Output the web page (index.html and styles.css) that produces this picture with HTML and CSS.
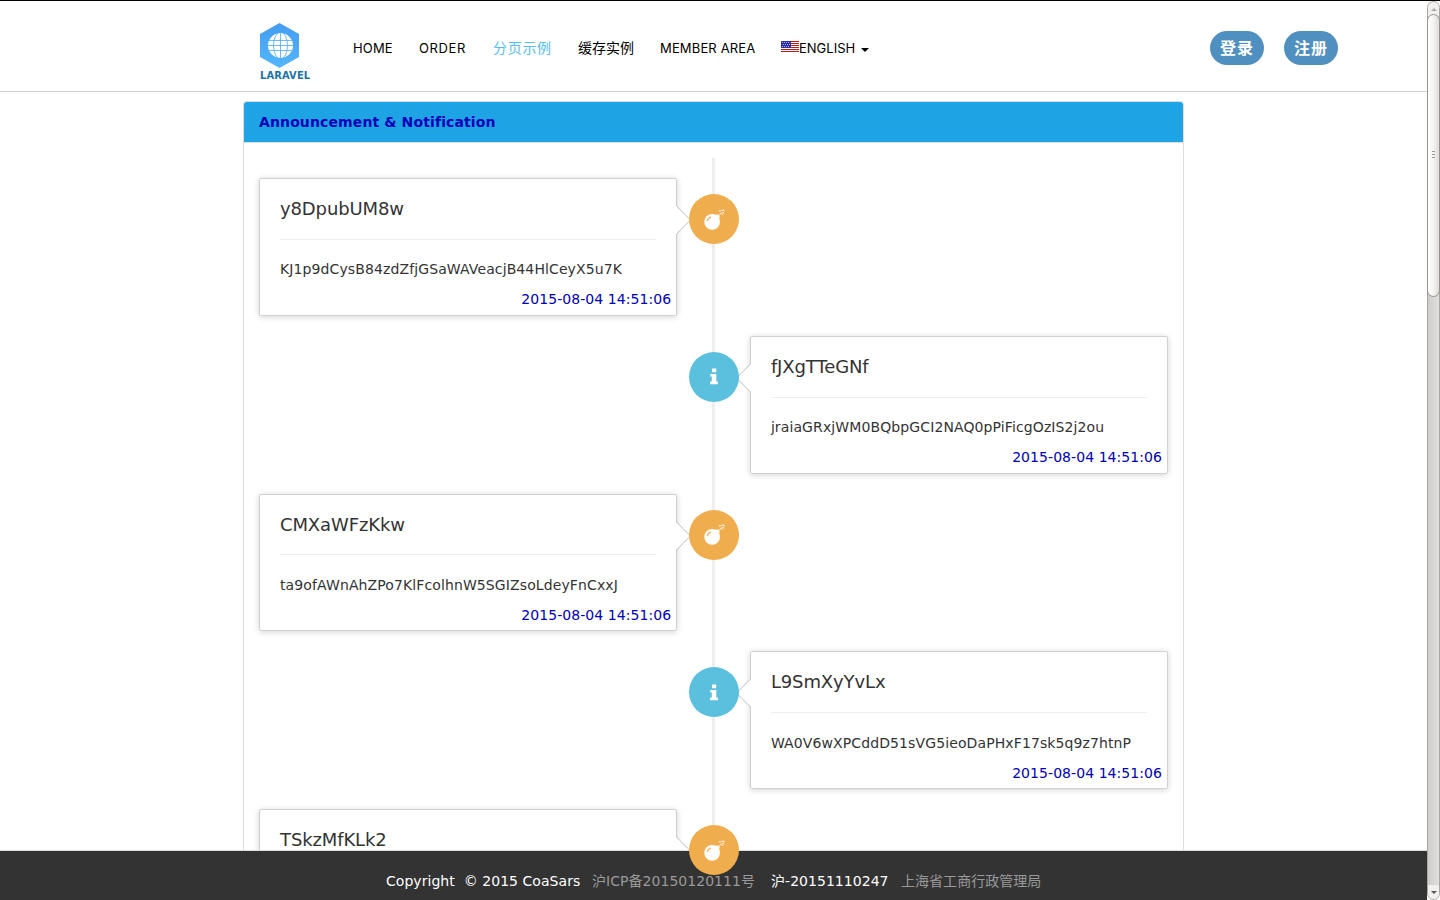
FILE: index.html
```html
<!DOCTYPE html>
<html lang="zh">
<head>
<meta charset="utf-8">
<title>Laravel</title>
<link rel="stylesheet" href="styles.css">
</head>
<body>
<svg class="defs" width="0" height="0">
  <symbol id="bomb" viewBox="0 0 22 22">
    <circle cx="8.500" cy="13.500" r="8.200" fill="#fff"/>
    <path d="M11.5 6l3.200-.2 1.500 1.700-.2 3z" fill="#fff"/>
    <path d="M3.400 12.400a5.400 5.400 0 0 1 4-4" fill="none" stroke="#f0ad4e" stroke-width="1.300"/>
    <path d="M15 7.300l3.400-3.400M15.600 2h2.200M18.400.8l.6 1.400M19.500 1.200h1.500v1.300M19.300 3.600l1.700.6M18.800 4.600l.4 1.500" fill="none" stroke="#fff" stroke-width="1"/>
  </symbol>
  <symbol id="info" viewBox="0 0 8 17">
    <path d="M2 .500h4.200v3.700H2zM.3 6h6v7.500h1.600v2.700H.1v-2.700h1.700V8.600H.3z" fill="#fff"/>
  </symbol>
</svg>
<div class="window">
  <div class="page">
    <header class="header">
      <a class="brand">
        <svg class="logo" viewBox="0 0 40 46" width="40" height="46">
          <defs><linearGradient id="g" x1="0" y1="0" x2="0" y2="1"><stop offset="0" stop-color="#449cf0"/><stop offset="1" stop-color="#55b6ff"/></linearGradient></defs>
          <path d="M19.5 0L39 11v23L19.5 45 0 34V11z" fill="url(#g)"/>
          <circle cx="20.5" cy="22.5" r="12.5" fill="#fff"/>
          <g fill="none" stroke="#4ca9f8" stroke-width=".8">
            <path d="M20.5 10v25M8 22.500h25M9 17.500h23M9 27.500h23"/>
            <ellipse cx="20.5" cy="22.500" rx="7" ry="13.500"/>
          </g>
        </svg>
        <span class="brand-name">LARAVEL</span>
      </a>
      <nav class="nav">
        <a>HOME</a>
        <a class="order">ORDER</a>
        <a class="cn active">分页示例</a>
        <a class="cn cache">缓存实例</a>
        <a>MEMBER AREA</a>
        <a class="lang"><svg class="flag" viewBox="0 0 18 11" width="18" height="11"><path fill="#fff" d="M0 0h18v11H0z"/><path stroke="#c01818" d="M0 .5h18M0 2.500h18M0 4.500h18M0 6.500h18M0 8.500h18M0 10.500h18"/><path fill="#3030a8" d="M0 0h10v7H0z"/><path stroke="#a4a4e0" stroke-dasharray="1 1" d="M1 1.500h8M2 3.500h7M1 5.500h8"/></svg><span>ENGLISH</span><i class="caret"></i></a>
      </nav>
      <div class="auth"><a class="btn">登录</a><a class="btn">注册</a></div>
    </header>
    <main class="panel">
      <h3 class="panel-heading">Announcement &amp; Notification</h3>
      <ul class="timeline">
        <li class="item">
          <span class="badge warning"><svg class="bomb"><use href="#bomb"/></svg></span>
          <article class="card"><h4>y8DpubUM8w</h4><hr><p>KJ1p9dCysB84zdZfjGSaWAVeacjB44HlCeyX5u7K</p><time>2015-08-04 14:51:06</time></article>
        </li>
        <li class="item inverted">
          <span class="badge info"><svg class="i"><use href="#info"/></svg></span>
          <article class="card"><h4>fJXgTTeGNf</h4><hr><p>jraiaGRxjWM0BQbpGCI2NAQ0pPiFicgOzIS2j2ou</p><time>2015-08-04 14:51:06</time></article>
        </li>
        <li class="item">
          <span class="badge warning"><svg class="bomb"><use href="#bomb"/></svg></span>
          <article class="card"><h4>CMXaWFzKkw</h4><hr><p>ta9ofAWnAhZPo7KlFcolhnW5SGIZsoLdeyFnCxxJ</p><time>2015-08-04 14:51:06</time></article>
        </li>
        <li class="item inverted">
          <span class="badge info"><svg class="i"><use href="#info"/></svg></span>
          <article class="card"><h4>L9SmXyYvLx</h4><hr><p>WA0V6wXPCddD51sVG5ieoDaPHxF17sk5q9z7htnP</p><time>2015-08-04 14:51:06</time></article>
        </li>
        <li class="item">
          <span class="badge warning"><svg class="bomb"><use href="#bomb"/></svg></span>
          <article class="card"><h4>TSkzMfKLk2</h4></article>
        </li>
      </ul>
    </main>
    <footer class="footer">
      <span class="copy">Copyright &nbsp;© 2015 CoaSars</span>
      <span class="muted icp">沪ICP备20150120111号</span>
      <span class="reg">沪-20151110247</span>
      <span class="muted">上海省工商行政管理局</span>
    </footer>
  </div>
  <div class="scrollbar">
    <div class="arrow up"></div>
    <div class="thumb"><i></i><i></i><i></i></div>
    <div class="arrow down"></div>
  </div>
</div>
</body>
</html>
```
FILE: styles.css
```css
* { box-sizing: border-box; }
body {
  margin: 0;
  background: #fff;
  color: #333;
  font: 14px/20px "DejaVu Sans", "Noto Sans CJK SC", sans-serif;
}
.defs { position: absolute; }
.window {
  display: flex;
  height: 900px;
  border-top: 1px solid #000;
  overflow: hidden;
}
.page {
  width: 1427px;
  height: 899px;
  display: flex;
  flex-direction: column;
}
.header {
  flex: none;
  display: flex;
  height: 91px;
  padding: 22px 89px 0 260px;
  border-bottom: 1px solid #d0d0d0;
}
.brand { display: flex; flex-direction: column; width: 93px; }
.brand-name {
  color: #1b74a8;
  font: bold 11px/14px "DejaVu Sans Condensed", "DejaVu Sans", sans-serif;
  font-stretch: condensed;
  letter-spacing: .15px;
}
.nav {
  display: grid;
  grid-template-columns: 66px 74px 85px 82px 121px auto;
  height: 20px;
  margin-top: 16px;
  color: #000;
  font: 13px/19px Inter, sans-serif;
  letter-spacing: .15px;
  white-space: nowrap;
}
.order { letter-spacing: .6px; }
.cn {
  font: 14px/17px "AR PL UKai CN", KaiTi, "Noto Sans CJK SC", sans-serif;
  letter-spacing: .7px;
}
.active { color: #55bdf5; }
.cache { letter-spacing: 0; }
.lang { display: flex; letter-spacing: 0; }
.flag { margin-top: 2px; }
.caret {
  margin: 9px 0 0 6px;
  height: 0;
  border: 4px solid transparent;
  border-top-color: #000;
  border-bottom: 0;
}
.auth { display: flex; gap: 20px; margin: 8px 0 0 auto; }
.btn {
  width: 54px;
  height: 34px;
  border-radius: 17px;
  background: #5090c0;
  color: #fff;
  font: bold 16px/33px "Noto Sans CJK SC", sans-serif;
  letter-spacing: 1px;
  text-align: center;
}
.panel {
  flex: 1;
  min-height: 0;
  width: 941px;
  margin: 9px auto 0;
  border: 1px solid #ddd;
  border-bottom: 0;
  border-radius: 4px 4px 0 0;
}
.panel-heading {
  margin: 0;
  padding: 10px 15px;
  height: 41px;
  border-bottom: 1px solid #ddd;
  border-radius: 3px 3px 0 0;
  background: #1ea4e5;
  color: #0000b8;
  font-size: 14px;
  line-height: 20px;
  letter-spacing: .12px;
}
.timeline {
  position: relative;
  list-style: none;
  margin: 15px 15px 0;
  padding: 20px 0 0;
}
.timeline::before {
  content: "";
  position: absolute;
  top: 0;
  bottom: 0;
  left: 50%;
  width: 3px;
  margin-left: -1.5px;
  background: #eee;
}
.item { position: relative; display: flex; margin-bottom: 20px; }
.inverted { justify-content: flex-end; }
.badge {
  position: absolute;
  z-index: 100;
  top: 16px;
  left: 50%;
  width: 50px;
  height: 50px;
  margin-left: -24.5px;
  border-radius: 50%;
  display: flex;
  align-items: center;
  justify-content: center;
}
.warning { background: #f0ad4e; }
.info { background: #5bc0de; padding-right: 1px; }
.bomb { width: 21px; height: 21px; }
.i { width: 8px; height: 17px; }
.card {
  position: relative;
  width: 46%;
  height: 137.8px;
  padding: 20px;
  border: 1px solid #d0d0d0;
  border-radius: 2px;
  box-shadow: 0 1px 6px rgba(0, 0, 0, .175);
}
.card::before, .card::after {
  content: "";
  position: absolute;
  top: 26px;
  right: -15px;
  border: 15px solid transparent;
  border-left-color: #bbb;
  border-right: 0;
}
.card::after {
  top: 27px;
  right: -14px;
  border-width: 14px;
  border-right: 0;
  border-left-color: #fff;
}
.inverted .card::before, .inverted .card::after {
  right: auto;
  left: -15px;
  border-right: 15px solid #bbb;
  border-left: 0;
}
.inverted .card::after { left: -14px; border-right: 14px solid #fff; }
h4 {
  margin: 0;
  font-size: 18px;
  font-weight: 400;
  line-height: 19.8px;
  letter-spacing: -.12px;
}
hr { height: 1px; margin: 20px 0 19.65px; border: 0; background: #eee; }
p { margin: 0 0 10px; letter-spacing: .11px; }
time {
  display: block;
  margin-right: -15px;
  color: #0000b8;
  letter-spacing: .06px;
  text-align: right;
}
.footer {
  position: relative;
  z-index: 1;
  flex: none;
  display: flex;
  height: 50px;
  padding: 20px 0 0 386px;
  border-top: 1px solid #ddd;
  background: #333;
  color: #fff;
  letter-spacing: .04px;
  white-space: nowrap;
}
.copy { width: 206px; }
.icp { width: 179px; }
.reg { width: 130px; }
.muted { color: #999; }
.scrollbar {
  position: relative;
  z-index: 2;
  width: 13px;
  height: 899px;
  display: flex;
  flex-direction: column;
  justify-content: space-between;
  border: 1px solid #aaa5a0;
  border-radius: 7px;
  background: linear-gradient(90deg, #cfcdcb, #e0dfdd);
}
.arrow {
  height: 14px;
  flex: none;
  display: flex;
  align-items: center;
  justify-content: center;
  background: #f1f0ef;
  border-radius: 6px 6px 0 0;
}
.arrow::before { content: ""; border: 3px solid transparent; }
.up::before { border-bottom-color: #aaa; border-top: 0; }
.down { border-radius: 0 0 6px 6px; }
.down::before { border-top-color: #555; border-bottom: 0; }
.thumb {
  height: 283px;
  margin: -2px -1px auto;
  padding-bottom: 3px;
  border: 1px solid #99938e;
  border-radius: 7px;
  background: linear-gradient(90deg, #fff, #f4f3f2 50%, #dddbd9);
  display: flex;
  flex-direction: column;
  align-items: center;
  justify-content: center;
  gap: 2px;
}
.thumb i { width: 3px; height: 1px; background: #999; }
```
